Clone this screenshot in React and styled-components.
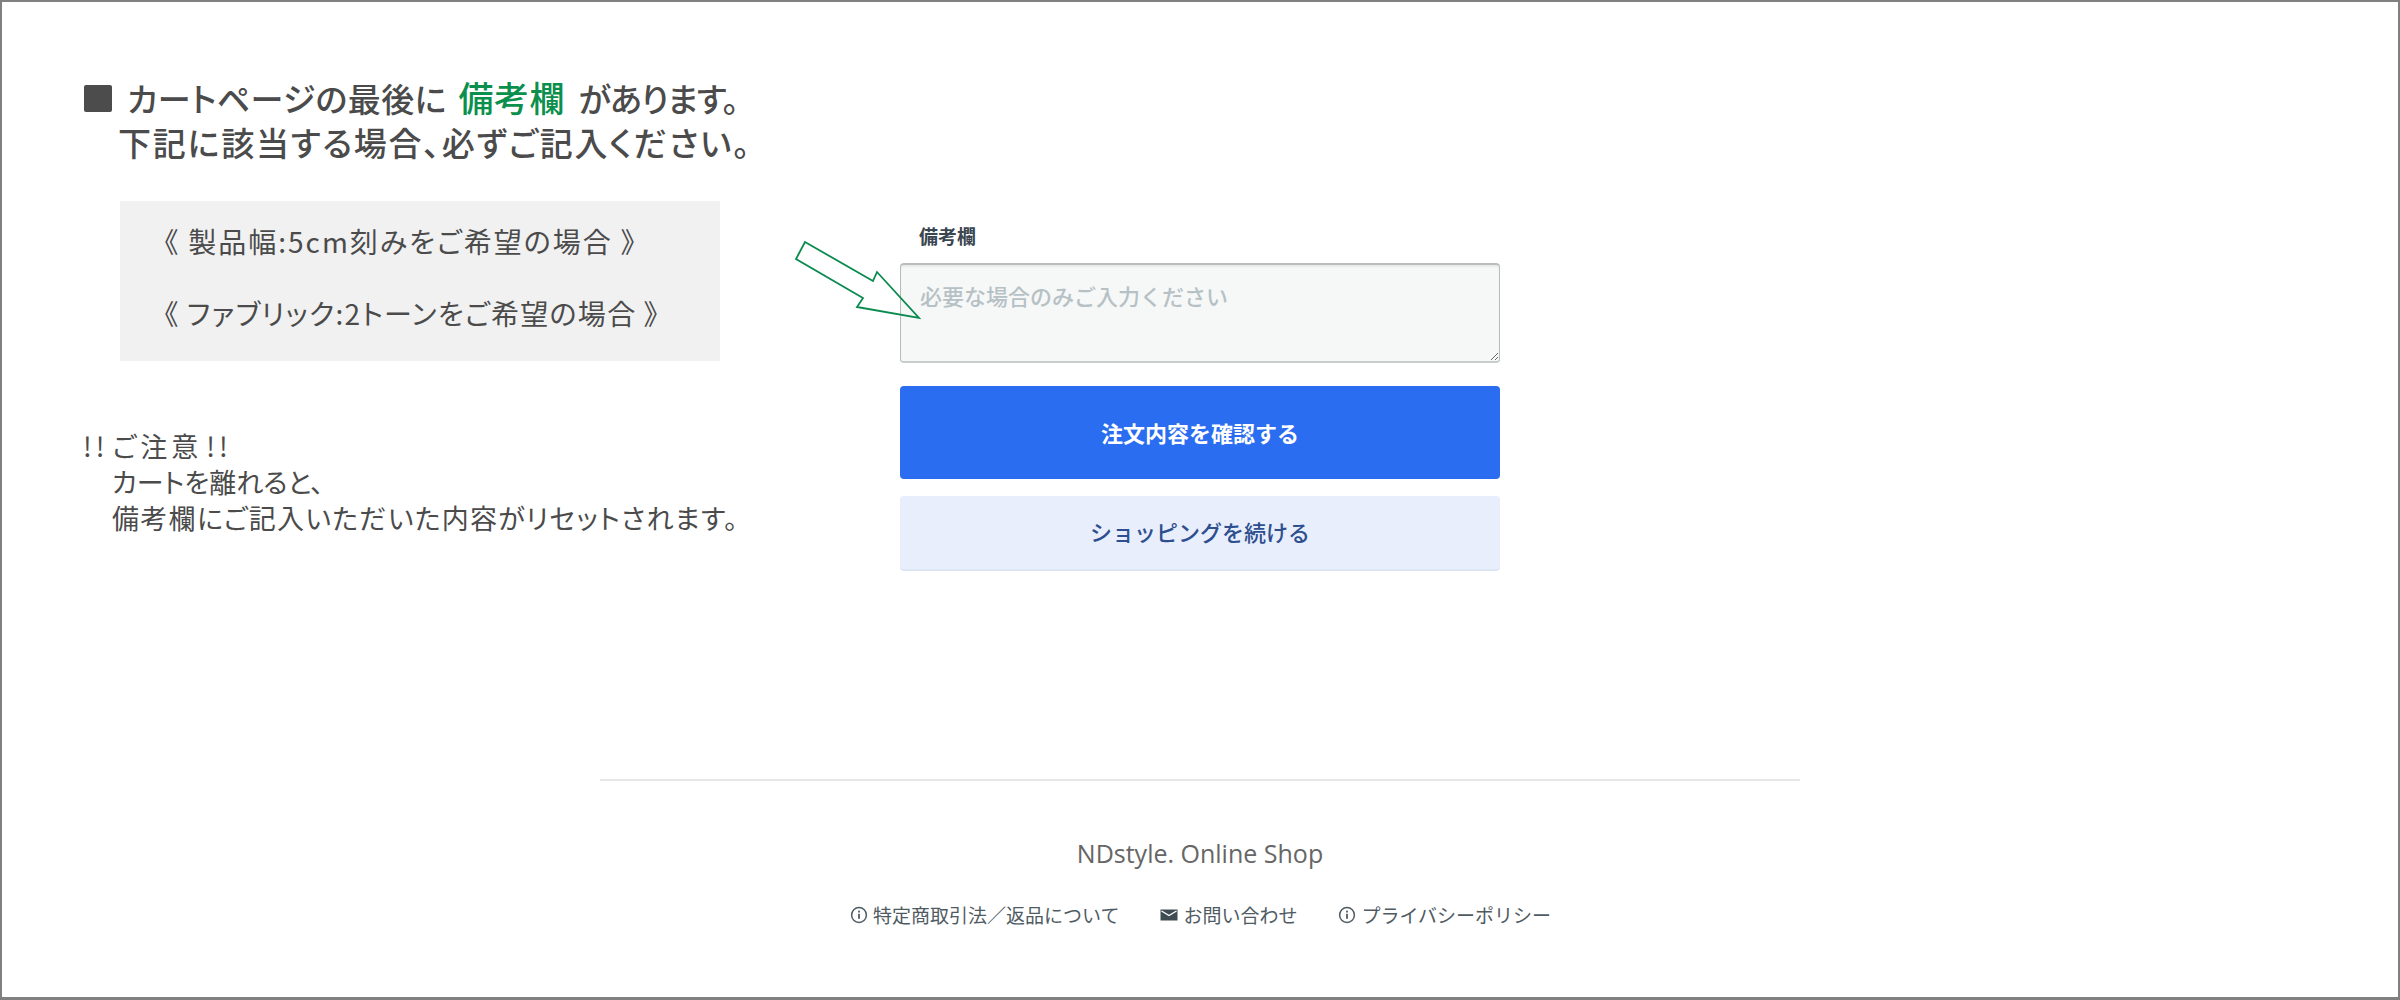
import React from 'react';
import styled, { createGlobalStyle } from 'styled-components';

const GlobalStyle = createGlobalStyle`
  html, body {
    margin: 0;
    background: #fff;
  }
  * {
    box-sizing: border-box;
  }
`;

const JP = `"Noto Sans CJK JP", "Noto Sans", sans-serif`;

const InfoIcon = () => (
  <svg width="20" height="20" viewBox="0 0 20 20" fill="none">
    <circle cx="10" cy="10" r="7.4" stroke="#4f5b62" strokeWidth="1.5" />
    <rect x="9.1" y="8.8" width="1.8" height="5" fill="#4f5b62" />
    <rect x="9.1" y="5.6" width="1.8" height="1.9" fill="#4f5b62" />
  </svg>
);

const MailIcon = () => (
  <svg width="20" height="20" viewBox="0 0 20 20">
    <path d="M1.5 4.5h17v11h-17z" fill="#3f4c54" />
    <path d="M2.5 6l7.5 4.6L17.500 6" fill="none" stroke="#fff" strokeWidth="1.3" />
  </svg>
);

const Arrow = () => (
  <ArrowSvg width="130" height="84" viewBox="0 0 130 84" fill="none">
    <polygon
      points="10,2 78,41 82,32 124,78 62,67 68,58 1,19"
      stroke="#0b8a4f"
      strokeWidth="1.8"
    />
  </ArrowSvg>
);

export default function App() {
  return (
    <>
      <GlobalStyle />
      <Frame>
        <Main>
          <Notes>
            <Heading>
              <Square />
              <HeadingLine>
                カートページの最後に <Green>備考欄</Green> <Tight>があります。</Tight>
              </HeadingLine>
              <HeadingLine $indent>下記に該当する場合、必ずご記入ください。</HeadingLine>
            </Heading>
            <GrayBox>
              <GrayLine $spacing="2px">《 製品幅:5cm刻みをご希望の場合 》</GrayLine>
              <GrayLine $spacing="1.3px">《 ファブリック:2トーンをご希望の場合 》</GrayLine>
            </GrayBox>
            <Warning>
              <Caution>!! ご注意 !!</Caution>
              <WarningLine $indent>カートを離れると、</WarningLine>
              <WarningLine $indent $spacing="1.3px">備考欄にご記入いただいた内容がリセットされます。</WarningLine>
            </Warning>
          </Notes>
          <Form>
            <Arrow />
            <FieldLabel>備考欄</FieldLabel>
            <Note placeholder="必要な場合のみご入力ください" />
            <PrimaryButton>注文内容を確認する</PrimaryButton>
            <SecondaryButton>ショッピングを続ける</SecondaryButton>
          </Form>
        </Main>
        <Footer>
          <ShopName>NDstyle. Online Shop</ShopName>
          <FooterLinks>
            <FooterLink>
              <InfoIcon />
              特定商取引法／返品について
            </FooterLink>
            <FooterLink>
              <MailIcon />
              お問い合わせ
            </FooterLink>
            <FooterLink>
              <InfoIcon />
              プライバシーポリシー
            </FooterLink>
          </FooterLinks>
        </Footer>
      </Frame>
    </>
  );
}

const Frame = styled.div`
  width: 2400px;
  height: 1000px;
  border: 2px solid #808080;
  border-width: 2px 2px 3px 2px;
  display: flex;
  flex-direction: column;
  font-family: ${JP};
  font-feature-settings: 'palt';
  overflow: hidden;
`;

const Main = styled.div`
  display: flex;
  height: 777px;
  padding-left: 81px;
`;

const Notes = styled.div`
  width: 817px;
  padding-top: 73px;
`;

const Heading = styled.div`
  position: relative;
  color: #4b4b4b;
  font-size: 33px;
  font-weight: 500;
  line-height: 44px;
`;

const Square = styled.span`
  position: absolute;
  left: 1px;
  top: 10px;
  width: 28px;
  height: 27px;
  background: #4c4c4c;
  border-radius: 2px;
`;

const HeadingLine = styled.div`
  padding-left: ${(p) => (p.$indent ? '35px' : '44px')};
  letter-spacing: ${(p) => (p.$indent ? '1.8px' : '0.4px')};
  white-space: pre;
`;

const Green = styled.span`
  margin: 0 6px 0 4px;
  color: #0a8f4d;
  font-weight: 500;
  font-size: 35px;
`;

const Tight = styled.span`
  letter-spacing: -1px;
`;

const GrayBox = styled.div`
  margin: 37px 0 0 37px;
  width: 600px;
  height: 160px;
  background: #f1f1f1;
  padding: 20px 0 0 44px;
  display: flex;
  flex-direction: column;
  gap: 32px;
`;

const GrayLine = styled.div`
  color: #4b4b4b;
  font-size: 28px;
  line-height: 40px;
  letter-spacing: ${(p) => p.$spacing};
  white-space: pre;
`;

const Warning = styled.div`
  margin-top: 67px;
  color: #4b4b4b;
  font-size: 27px;
  line-height: 36px;
`;

const WarningLine = styled.div`
  padding-left: ${(p) => (p.$indent ? '29px' : '0')};
  letter-spacing: ${(p) => p.$spacing || '0'};
  white-space: pre;
`;

const Caution = styled(WarningLine)`
  letter-spacing: 4px;
  word-spacing: -6px;
`;

const Form = styled.div`
  position: relative;
  width: 600px;
  padding-top: 222px;
  display: flex;
  flex-direction: column;
`;

const ArrowSvg = styled.svg`
  position: absolute;
  left: -105px;
  top: 238px;
  z-index: 2;
`;

const FieldLabel = styled.div`
  margin-left: 19px;
  height: 27px;
  color: #3a4650;
  font-size: 19px;
  font-weight: 700;
  line-height: 24px;
`;

const Note = styled.textarea`
  display: block;
  width: 600px;
  height: 100px;
  margin-top: 12px;
  padding: 15px 19px;
  background: #f6f8f7;
  border: 1px solid #b9bdbd;
  border-top: 2px solid #b9bdbd;
  border-bottom: 2px solid #c9cccc;
  border-radius: 4px;
  box-shadow: inset 0 2px 2px rgba(0, 0, 0, 0.06);
  font-family: ${JP};
  font-size: 22px;
  font-weight: 500;
  line-height: 30px;
  outline: none;

  &::placeholder {
    color: #b6c1c6;
    opacity: 1;
  }
`;

const PrimaryButton = styled.button`
  width: 600px;
  height: 93px;
  margin-top: 23px;
  padding: 0 0 2px;
  border: 0;
  border-radius: 4px;
  background: #2a6df0;
  color: #fff;
  font-family: ${JP};
  font-size: 22px;
  font-weight: 700;
`;

const SecondaryButton = styled.button`
  width: 600px;
  height: 75px;
  margin-top: 17px;
  padding: 0 0 4px;
  border: 0;
  border-bottom: 2px solid #dde6f5;
  border-radius: 4px;
  background: #e8eefb;
  color: #2d4f8f;
  font-family: ${JP};
  font-size: 22px;
  font-weight: 500;
`;

const Footer = styled.footer`
  width: 1200px;
  margin-left: 598px;
  border-top: 2px solid #e6e6e6;
  display: flex;
  flex-direction: column;
  align-items: center;
`;

const ShopName = styled.div`
  margin-top: 54px;
  color: #666;
  font-family: 'Open Sans', sans-serif;
  font-size: 25px;
  line-height: 36px;
  font-feature-settings: normal;
`;

const FooterLinks = styled.div`
  margin-top: 28px;
  display: flex;
  gap: 40px;
  font-feature-settings: normal;
`;

const FooterLink = styled.a`
  display: flex;
  align-items: center;
  gap: 4px;
  color: #4f5b62;
  font-size: 19px;
  line-height: 32px;
`;
